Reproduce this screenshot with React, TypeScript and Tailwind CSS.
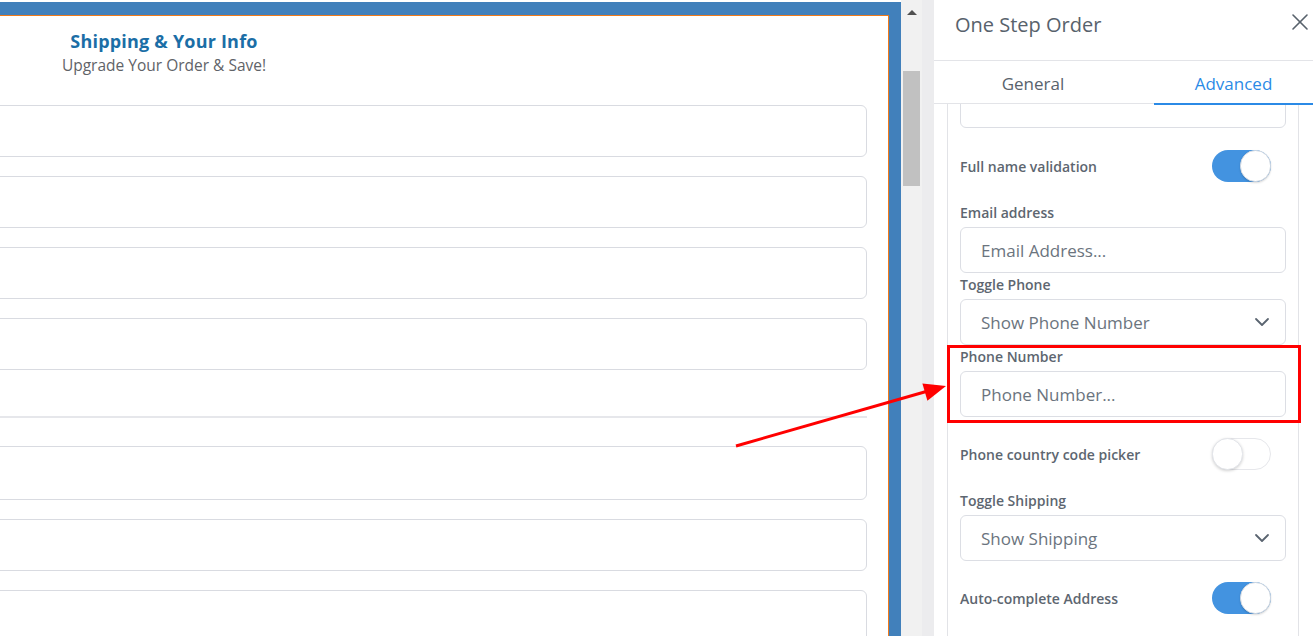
import React from "react";
import { X, ChevronDown } from "lucide-react";

const font = { fontFamily: '"Open Sans", "Noto Sans", Arial, sans-serif' };

function Toggle({ on }: { on: boolean }) {
  return on ? (
    <div className="relative w-[59px] h-[32px] rounded-full bg-[#4393e0] mr-[15px] shrink-0">
      <div className="absolute right-0 top-0 w-[31px] h-[32px] rounded-full bg-white border border-[#d5dbe3] shadow-[0_1px_2px_rgba(0,0,0,0.15)]" />
    </div>
  ) : (
    <div className="relative w-[59px] h-[32px] rounded-full bg-white border border-[#e6e7eb] mr-[15px] shrink-0">
      <div className="absolute left-[-1px] top-[-1px] w-[31px] h-[32px] rounded-full bg-white border border-[#e3e5ea] shadow-[0_1px_3px_rgba(0,0,0,0.18)]" />
    </div>
  );
}

function Label({ children }: { children: React.ReactNode }) {
  return (
    <div className="h-[20px] pt-px flex items-center text-[14px] font-semibold text-[#5d6670] leading-none">
      {children}
    </div>
  );
}

function Field({ text, select }: { text: string; select?: boolean }) {
  return (
    <div className="mt-[5px] h-[46px] rounded-[6px] border border-[#dcdee4] bg-white flex items-center pl-[20px] pr-[11px] justify-between">
      <span className="text-[17px] text-[#6b747e] pt-px">{text}</span>
      {select && <ChevronDown size={24} strokeWidth={1.8} className="text-[#5a6470]" />}
    </div>
  );
}

function ToggleRow({ label, on }: { label: string; on: boolean }) {
  return (
    <div className="h-[32px] flex items-center justify-between">
      <span className="text-[14px] font-semibold text-[#5d6670]">{label}</span>
      <Toggle on={on} />
    </div>
  );
}

function LeftInput({ h, mt }: { h: string; mt: string }) {
  return <div className={`${h} ${mt} -ml-[10px] rounded-[6px] border border-[#d9dbe1] bg-white`} />;
}

export default function App() {
  return (
    <div className="relative w-[1313px] h-[636px] overflow-hidden bg-white flex" style={font}>
      {/* Left canvas */}
      <div className="w-[901px] h-full pt-[2px] bg-white shrink-0">
        <div className="h-full bg-[#4180bb] pt-[13px] pr-[12px]">
          <div className="h-full bg-white border-t border-r border-[#f07a1a] pr-[21px]">
            <div className="w-[328px] pt-[13px] text-center">
              <div className="text-[18px] font-bold text-[#1b6ea6] leading-[24px] tracking-[0.2px]">Shipping &amp; Your Info</div>
              <div className="text-[15.5px] text-[#5f6368] leading-[20px] mt-[2px]">Upgrade Your Order &amp; Save!</div>
            </div>
            <div className="mt-[30px]">
              <LeftInput h="h-[52px]" mt="mt-0" />
              <LeftInput h="h-[52px]" mt="mt-[19px]" />
              <LeftInput h="h-[52px]" mt="mt-[19px]" />
              <LeftInput h="h-[52px]" mt="mt-[19px]" />
              <div className="mt-[46px] h-[2px] bg-[#e6e7eb]" />
              <LeftInput h="h-[54px]" mt="mt-[28px]" />
              <LeftInput h="h-[52px]" mt="mt-[19px]" />
              <LeftInput h="h-[60px]" mt="mt-[19px]" />
            </div>
          </div>
        </div>
      </div>

      {/* Scrollbar */}
      <div className="w-[21px] h-full bg-[#f1f1f1] shrink-0 flex flex-col items-center pt-[10px]">
        <div className="w-0 h-0 border-l-[5px] border-r-[5px] border-b-[5px] border-l-transparent border-r-transparent border-b-[#505050]" />
        <div className="mt-[56px] w-[17px] h-[115px] bg-[#c1c1c1]" />
      </div>
      <div className="w-[12px] h-full bg-[#ececee] shrink-0" />

      {/* Right panel */}
      <div className="w-[379px] h-full bg-white shrink-0 flex flex-col">
        <div className="h-[61px] border-b border-[#e3e4e8] flex items-center justify-between pl-[21px] relative">
          <span className="text-[20px] text-[#58626c] -mt-[10px]">One Step Order</span>
          <X size={28} strokeWidth={1.4} className="absolute left-[352px] top-[8px] text-[#58626c]" />
        </div>
        <div className="h-[43px] border-b border-[#e3e4e8] flex relative">
          <div className="w-[220px] flex items-center justify-center pr-[22px] pt-[4px] text-[17px] text-[#58626c]">General</div>
          <div className="flex-1 flex items-center justify-center pt-[4px] text-[17px] text-[#2b8ae6]">Advanced</div>
          <div className="absolute right-0 bottom-[-2px] w-[159px] h-[2px] bg-[#2b8ae6]" />
        </div>
        <div className="ml-[13px] w-[352px] flex-1 border-l border-r border-[#e2e3e7] pl-[12px] pr-[12px] overflow-hidden">
          <div className="-mt-[22px] h-[46px] rounded-[6px] border border-[#dcdee4]" />
          <div className="mt-[22px]">
            <ToggleRow label="Full name validation" on />
          </div>
          <div className="mt-[20px]">
            <Label>Email address</Label>
            <Field text="Email Address..." />
          </div>
          <div className="mt-px">
            <Label>Toggle Phone</Label>
            <Field text="Show Phone Number" select />
          </div>
          <div className="mt-px">
            <Label>Phone Number</Label>
            <Field text="Phone Number..." />
          </div>
          <div className="mt-[21px]">
            <ToggleRow label="Phone country code picker" on={false} />
          </div>
          <div className="mt-[20px]">
            <Label>Toggle Shipping</Label>
            <Field text="Show Shipping" select />
          </div>
          <div className="mt-[21px]">
            <ToggleRow label="Auto-complete Address" on />
          </div>
        </div>
      </div>

      {/* Annotation: red box */}
      <div className="absolute left-[947px] top-[345px] w-[354px] h-[78px] border-[3px] border-[#ff0000] pointer-events-none" />
      {/* Annotation: arrow */}
      <svg className="absolute left-0 top-0 pointer-events-none" width={1313} height={636} viewBox="0 0 1313 636">
        <line x1={736} y1={446} x2={928} y2={391} stroke="#ff0000" strokeWidth={3} />
        <polygon points="946,386 927.4,400.7 922.4,383.4" fill="#ff0000" />
      </svg>
    </div>
  );
}
